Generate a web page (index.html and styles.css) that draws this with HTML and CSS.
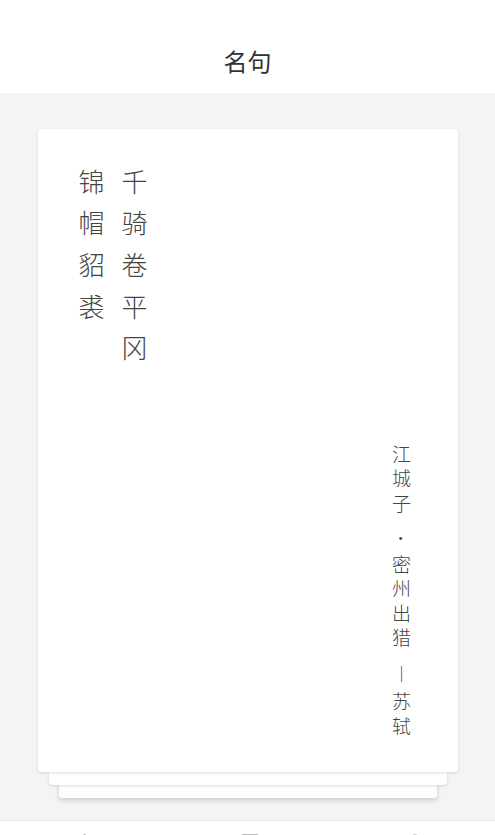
FILE: index.html
```html
<!DOCTYPE html>
<html lang="zh">
<head>
<meta charset="utf-8">
<title>名句</title>
<link rel="stylesheet" href="styles.css">
</head>
<body>
<div class="app">
  <header class="topbar">
    <h1 class="title">名句</h1>
  </header>
  <main class="content">
    <div class="stack">
      <article class="card">
        <div class="poem">
          <span class="line">千骑卷平冈</span>
          <span class="line">锦帽貂裘</span>
        </div>
        <div class="source">江城子<span class="dot">·</span>密州出猎<span class="dash">︱</span>苏轼</div>
      </article>
      <div class="layer layer-2"></div>
      <div class="layer layer-3"></div>
    </div>
  </main>
  <nav class="tabbar">
    <span class="tab">
      <svg viewBox="0 0 24 24" width="24" height="24"><path d="M4 22 L11 10 M11 1 L12 1" fill="none" stroke="#999" stroke-width="1.6" stroke-linecap="round"/></svg>
    </span>
    <span class="tab">
      <svg viewBox="0 0 24 24" width="24" height="24"><rect x="4" y="0.8" width="16" height="20" rx="1" fill="none" stroke="#bbb" stroke-width="1.4"/></svg>
    </span>
    <span class="tab">
      <svg viewBox="0 0 24 24" width="24" height="24"><circle cx="12" cy="6" r="5" fill="none" stroke="#bbb" stroke-width="1.4"/></svg>
    </span>
  </nav>
</div>
</body>
</html>
```
FILE: styles.css
```css
* { box-sizing: border-box; }
html, body { margin: 0; padding: 0; }
body {
  font-family: "Noto Sans CJK SC", "Noto Sans", sans-serif;
  color: #333;
  background: #f4f4f4;
}
.app {
  width: 495px;
  height: 835px;
  overflow: hidden;
  display: flex;
  flex-direction: column;
}
.topbar {
  height: 93px;
  background: #fff;
  display: flex;
  align-items: flex-end;
  justify-content: center;
  padding-bottom: 17px;
  flex-shrink: 0;
}
.title {
  margin: 0;
  font-size: 24px;
  font-weight: 400;
  line-height: 30px;
  color: #333;
}
.content {
  flex-shrink: 0;
  height: 727px;
  background: #f4f4f4;
  padding: 36px 37px 0 38px;
}
.stack {
  display: flex;
  flex-direction: column;
  align-items: center;
}
.card {
  position: relative;
  z-index: 3;
  width: 420px;
  height: 643px;
  background: #fff;
  border-radius: 3px;
  box-shadow: 0 1px 3px rgba(0,0,0,0.13);
  display: flex;
  justify-content: space-between;
  padding: 40px 42px 30px 32px;
}
.poem {
  writing-mode: vertical-rl;
  font-size: 26px;
  font-weight: 300;
  line-height: 43px;
  letter-spacing: 15.6px;
  color: #444;
  display: flex;
  flex-direction: column;
}
.line { display: block; }
.source {
  align-self: flex-end;
  writing-mode: vertical-rl;
  font-size: 19px;
  font-weight: 300;
  line-height: 30px;
  letter-spacing: 5.5px;
  color: #444;
}
.dot {
  font-size: 15px;
  padding-inline-start: 12px;
  padding-inline-end: 4px;
}
.dash {
  padding-inline-start: 11px;
  padding-inline-end: 4px;
}
.layer {
  position: relative;
  height: 13px;
  background: #fff;
  border-radius: 0 0 3px 3px;
}
.layer-2 {
  z-index: 2;
  width: 398px;
  box-shadow: 0 1px 3px rgba(0,0,0,0.14);
}
.layer-3 {
  z-index: 1;
  width: 378px;
  box-shadow: 0 2px 5px rgba(0,0,0,0.18);
}
.tabbar {
  flex: 1;
  background: #fff;
  border-top: 1px solid #e6e6e6;
  display: flex;
  justify-content: space-between;
  padding: 13px 68px 0 73px;
}
.tab { display: block; width: 24px; height: 24px; }
.tab svg { display: block; }
```
